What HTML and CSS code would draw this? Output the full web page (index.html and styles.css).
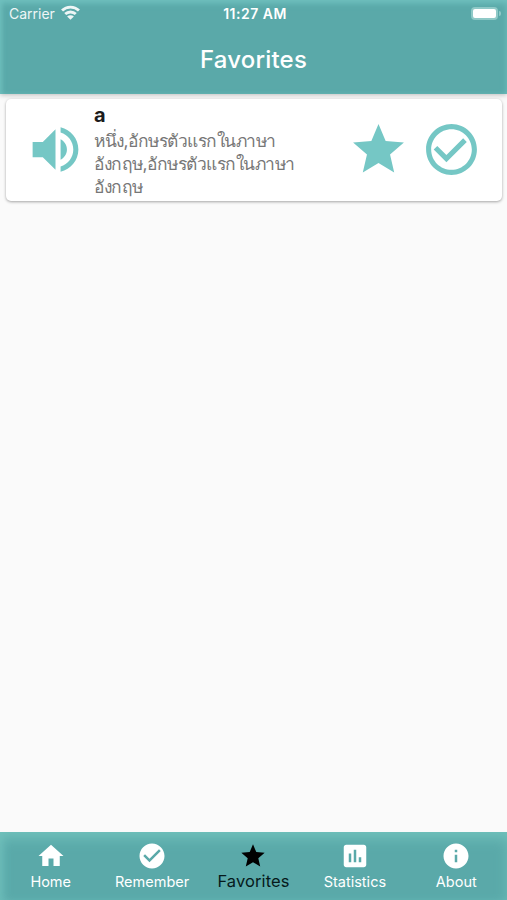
FILE: index.html
```html
<!DOCTYPE html>
<html lang="en">
<head>
    <meta charset="UTF-8">
    <meta name="viewport" content="width=device-width, initial-scale=1.0">
    <title>Favorites</title>
    <link rel="stylesheet" href="styles.css">
</head>
<body>
    <div class="app">
        <header class="header">
            <div class="status-bar">
                <div class="carrier">
                    <span>Carrier</span>
                    <svg class="wifi" viewBox="0 0 18 14">
                        <path d="M1 5.2a11.4 11.4 0 0 1 16 0" />
                        <path d="M4 8.5a7.2 7.2 0 0 1 10 0" />
                        <path class="wifi-dot" d="M9 13.8L5.8 10.8a4.6 4.6 0 0 1 6.4 0z" />
                    </svg>
                </div>
                <span class="time">11:27 AM</span>
                <div class="power">
                    <div class="battery"></div>
                    <div class="battery-cap"></div>
                </div>
            </div>
            <h1>Favorites</h1>
        </header>

        <main class="content">
            <div class="card">
                <svg class="card-icon" viewBox="0 0 24 24"><path d="M3 9v6h4l5 5V4L7 9H3zm13.5 3c0-1.77-1.02-3.29-2.5-4.03v8.05c1.48-.73 2.5-2.25 2.5-4.02zM14 3.23v2.06c2.89.86 5 3.54 5 6.71s-2.11 5.85-5 6.71v2.06c4.01-.91 7-4.49 7-8.77s-2.99-7.86-7-8.77z"/></svg>
                <div class="word">
                    <h2>a</h2>
                    <p lang="th">หนึ่ง,อักษรตัวแรกในภาษา<br>อังกฤษ,อักษรตัวแรกในภาษา<br>อังกฤษ</p>
                </div>
                <svg class="card-icon star" viewBox="0 0 24 24"><path d="M12 17.27L18.18 21l-1.64-7.03L22 9.24l-7.19-.61L12 2 9.19 8.63 2 9.24l5.46 4.73L5.82 21z"/></svg>
                <svg class="card-icon check" viewBox="0 0 24 24"><path d="M16.59 7.58L10 14.17l-3.59-3.58L5 12l5 5 8-8zM12 2C6.48 2 2 6.48 2 12s4.48 10 10 10 10-4.48 10-10S17.52 2 12 2zm0 18c-4.42 0-8-3.58-8-8s3.58-8 8-8 8 3.58 8 8-3.58 8-8 8z"/></svg>
            </div>
        </main>

        <nav class="tabs">
            <div class="tab">
                <svg viewBox="0 0 24 24"><path d="M10 20v-6h4v6h5v-8h3L12 3 2 12h3v8z"/></svg>
                <span>Home</span>
            </div>
            <div class="tab">
                <svg viewBox="0 0 24 24"><path d="M12 2C6.48 2 2 6.48 2 12s4.48 10 10 10 10-4.48 10-10S17.52 2 12 2zm-2 15l-5-5 1.41-1.41L10 14.17l7.59-7.59L19 8l-9 9z"/></svg>
                <span>Remember</span>
            </div>
            <div class="tab active">
                <svg viewBox="0 0 24 24"><path d="M12 17.27L18.18 21l-1.64-7.03L22 9.24l-7.19-.61L12 2 9.19 8.63 2 9.24l5.46 4.73L5.82 21z"/></svg>
                <span>Favorites</span>
            </div>
            <div class="tab">
                <svg viewBox="0 0 24 24"><path d="M19 3H5c-1.1 0-2 .9-2 2v14c0 1.1.9 2 2 2h14c1.1 0 2-.9 2-2V5c0-1.1-.9-2-2-2zM9 17H7v-7h2v7zm4 0h-2V7h2v10zm4 0h-2v-4h2v4z"/></svg>
                <span>Statistics</span>
            </div>
            <div class="tab">
                <svg viewBox="0 0 24 24"><path d="M12 2C6.48 2 2 6.48 2 12s4.48 10 10 10 10-4.48 10-10S17.52 2 12 2zm1 15h-2v-6h2v6zm0-8h-2V7h2v2z"/></svg>
                <span>About</span>
            </div>
        </nav>
    </div>
</body>
</html>
```
FILE: styles.css
```css
* {
    box-sizing: border-box;
}

body {
    margin: 0;
    font-family: Inter, Roboto, sans-serif;
    background-color: #fafafa;
}

.app {
    display: flex;
    flex-direction: column;
    height: 900px;
    overflow: hidden;
}

.header {
    height: 94px;
    color: white;
    background-color: #5aa9a9;
    box-shadow: inset 0 3px 6px #70c1bf, inset 3px 0 4px -1px #68b8b7, 0 1px 5px rgba(0, 0, 0, 0.25);
}

.status-bar {
    display: grid;
    grid-template-columns: 1fr auto 1fr;
    align-items: center;
    height: 27px;
    padding: 0 6px 0 9px;
    font-size: 14px;
}

.carrier {
    display: flex;
    align-items: center;
    gap: 6px;
    opacity: 0.9;
}

.wifi {
    width: 19px;
    height: 15px;
    margin-top: -2px;
    fill: none;
    stroke: white;
    stroke-width: 2.7;
}

.wifi .wifi-dot {
    fill: white;
    stroke: none;
}

.time {
    font-size: 14px;
    font-weight: 600;
    letter-spacing: 0.5px;
}

.power {
    display: flex;
    align-items: center;
    justify-content: flex-end;
    gap: 1px;
}

.battery {
    width: 27px;
    height: 13px;
    border: 2px solid #8fc9c7;
    border-radius: 4px;
    background-color: white;
}

.battery-cap {
    width: 2px;
    height: 5px;
    border-radius: 0 3px 3px 0;
    background-color: #8fc9c7;
}

h1 {
    margin: 17px 0 0;
    font-size: 24px;
    font-weight: 500;
    line-height: 32px;
    letter-spacing: 0.2px;
    text-align: center;
}

.content {
    flex: 1;
    padding: 5px 5px 0 6px;
}

.card {
    display: flex;
    align-items: center;
    height: 102px;
    padding: 0 20px 2px 19px;
    border-radius: 5px;
    background-color: white;
    box-shadow: 0 1px 3px rgba(0, 0, 0, 0.35);
}

.card-icon {
    flex: none;
    width: 61px;
    height: 61px;
    fill: #75c7c5;
}

.card-icon.star {
    margin-left: auto;
}

.card-icon.check {
    margin-left: 12px;
}

.word {
    align-self: flex-start;
    margin-left: 8px;
    padding-top: 4px;
    white-space: nowrap;
}

h2 {
    margin: 0;
    font-size: 20px;
    font-weight: 700;
    line-height: 24px;
    color: #1c1c1c;
}

.word p {
    margin: 2px 0 0;
    font-size: 17.4px;
    line-height: 23px;
    letter-spacing: -0.5px;
    color: #777;
}

.tabs {
    display: grid;
    grid-template-columns: repeat(5, 1fr);
    height: 68px;
    color: white;
    background-color: #5aa9a9;
    box-shadow: inset 0 8px 14px -2px #70c1bb, inset 5px 0 8px -2px #68b8b7;
}

.tab {
    display: flex;
    flex-direction: column;
    align-items: center;
    padding-top: 9px;
    font-size: 14.5px;
    line-height: 20px;
}

.tab svg {
    width: 30px;
    height: 30px;
    fill: white;
}

.tab span {
    margin-top: 1px;
}

.tab.active {
    font-size: 16.5px;
    letter-spacing: 0.1px;
    color: #06191b;
}

.tab.active svg {
    width: 28px;
    height: 28px;
    margin: 1px;
    fill: black;
}

.tab.active span {
    margin-top: 0;
}
```
